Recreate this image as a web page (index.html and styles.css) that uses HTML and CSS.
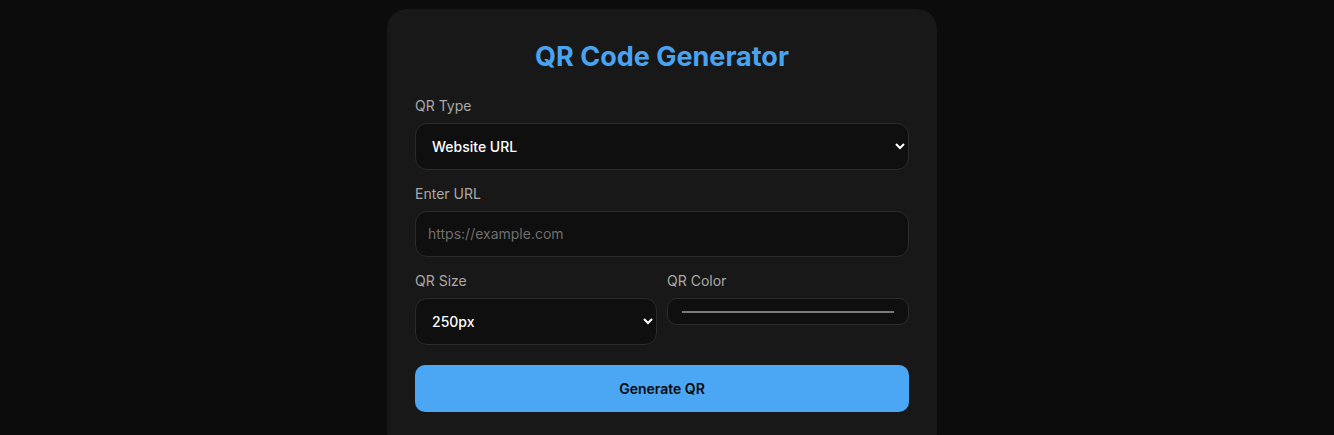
FILE: index.html
```html
<!DOCTYPE html>
<html lang="en">
<head>
<meta charset="utf-8">
<title>QR Code Generator</title>
<link rel="stylesheet" href="styles.css">
</head>
<body>
<main class="card">
  <h1 class="title">QR Code Generator</h1>
  <div class="field">
    <label class="label" for="type">QR Type</label>
    <select id="type" class="control select">
      <option>Website URL</option>
      <option>Text</option>
      <option>Email</option>
    </select>
  </div>
  <div class="field">
    <label class="label" for="url">Enter URL</label>
    <input id="url" class="control input" type="text" placeholder="https://example.com">
  </div>
  <div class="row">
    <div class="field">
      <label class="label" for="size">QR Size</label>
      <select id="size" class="control select">
        <option>250px</option>
        <option>300px</option>
      </select>
    </div>
    <div class="field">
      <span class="label">QR Color</span>
      <div class="color"><span class="swatch"></span></div>
    </div>
  </div>
  <button class="btn" type="button">Generate QR</button>
</main>
</body>
</html>
```
FILE: styles.css
```css
* { box-sizing: border-box; }
html, body { margin: 0; height: 100%; }
body {
  background: #0c0c0c;
  font-family: Inter, "Open Sans", sans-serif;
  display: flex;
  justify-content: center;
  padding: 9px 10px 0 0;
  overflow: hidden;
}
.card {
  width: 550px;
  background: #181818;
  border-radius: 20px;
  padding: 28px 28px 40px;
  align-self: flex-start;
  min-height: 440px;
}
.title {
  margin: 0 0 20px;
  text-align: center;
  color: #4aa3f0;
  font-size: 27px;
  line-height: 39px;
  font-weight: 700;
}
.field { display: flex; flex-direction: column; margin-bottom: 14px; }
.label {
  color: #a9a9a9;
  font-size: 14px;
  line-height: 20px;
  margin-bottom: 7px;
}
.control {
  width: 100%;
  background: #0f0f0f;
  border: 1px solid #2b2b2b;
  border-radius: 12px;
  color: #fff;
  font-family: inherit;
  font-size: 14px;
  outline: none;
}
.select { height: 47px; padding: 0 8px 0 12px; font-weight: 500; }
.input { height: 46px; padding: 0 12px 1px; }
.input::placeholder { color: #6e6e6e; }
.row { display: grid; grid-template-columns: 1fr 1fr; gap: 10px; }
.row .field { margin-bottom: 20px; }
.color {
  height: 27px;
  background: #0f0f0f;
  border: 1px solid #2b2b2b;
  border-radius: 10px;
  display: flex;
  align-items: center;
  padding: 0 14px;
}
.swatch { flex: 1; height: 2px; background: #7a7a7a; margin-top: 1px; }
.btn {
  display: block;
  width: 100%;
  height: 47px;
  border: 0;
  border-radius: 10px;
  background: #4ba6f3;
  color: #0a0a0a;
  font-family: inherit;
  font-size: 14px;
  font-weight: 600;
}
```
